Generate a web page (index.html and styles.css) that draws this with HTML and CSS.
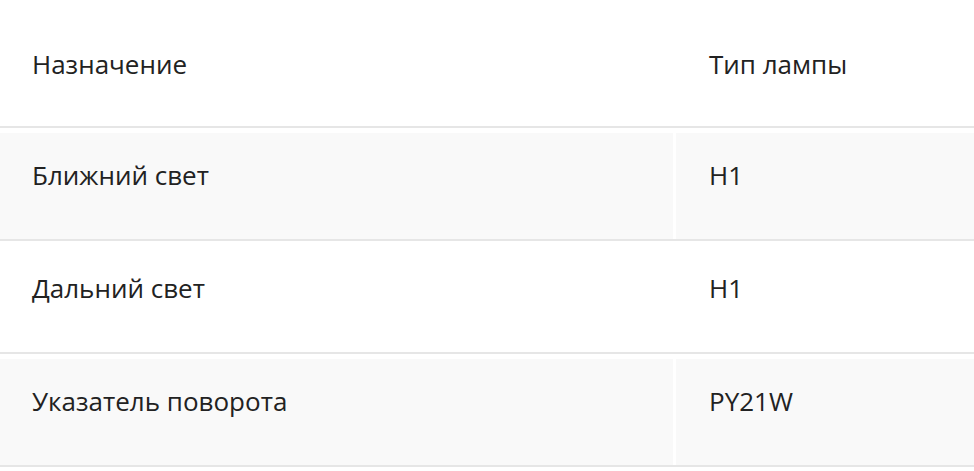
FILE: index.html
```html
<!DOCTYPE html>
<html lang="ru">
<head>
<meta charset="utf-8">
<link rel="stylesheet" href="styles.css">
</head>
<body>
<div class="table">
  <div class="row head">
    <div class="cell">Назначение</div>
    <div class="cell">Тип лампы</div>
  </div>
  <div class="row shaded">
    <div class="cell">Ближний свет</div>
    <div class="cell">H1</div>
  </div>
  <div class="row">
    <div class="cell">Дальний свет</div>
    <div class="cell">H1</div>
  </div>
  <div class="row shaded">
    <div class="cell">Указатель поворота</div>
    <div class="cell">PY21W</div>
  </div>
</div>
</body>
</html>
```
FILE: styles.css
```css
html, body {
  margin: 0;
  padding: 0;
  background: #ffffff;
}
body {
  font-family: "Open Sans", "Noto Sans", sans-serif;
  font-size: 26px;
  line-height: 39px;
  color: #222222;
  overflow: hidden;
}
.table {
  display: flex;
  flex-direction: column;
  gap: 5px;
  margin-top: 20px;
}
.row {
  display: grid;
  grid-template-columns: 673px 1fr;
  column-gap: 3px;
  border-bottom: 2px solid #e6e6e6;
}
.cell {
  height: 106px;
  box-sizing: border-box;
  padding: 23px 32px 44px 32px;
  white-space: nowrap;
}
.cell + .cell {
  padding-left: 33px;
}
.head .cell {
  padding-top: 25px;
  padding-bottom: 42px;
}
.shaded .cell {
  background: #f9f9f9;
}
```
